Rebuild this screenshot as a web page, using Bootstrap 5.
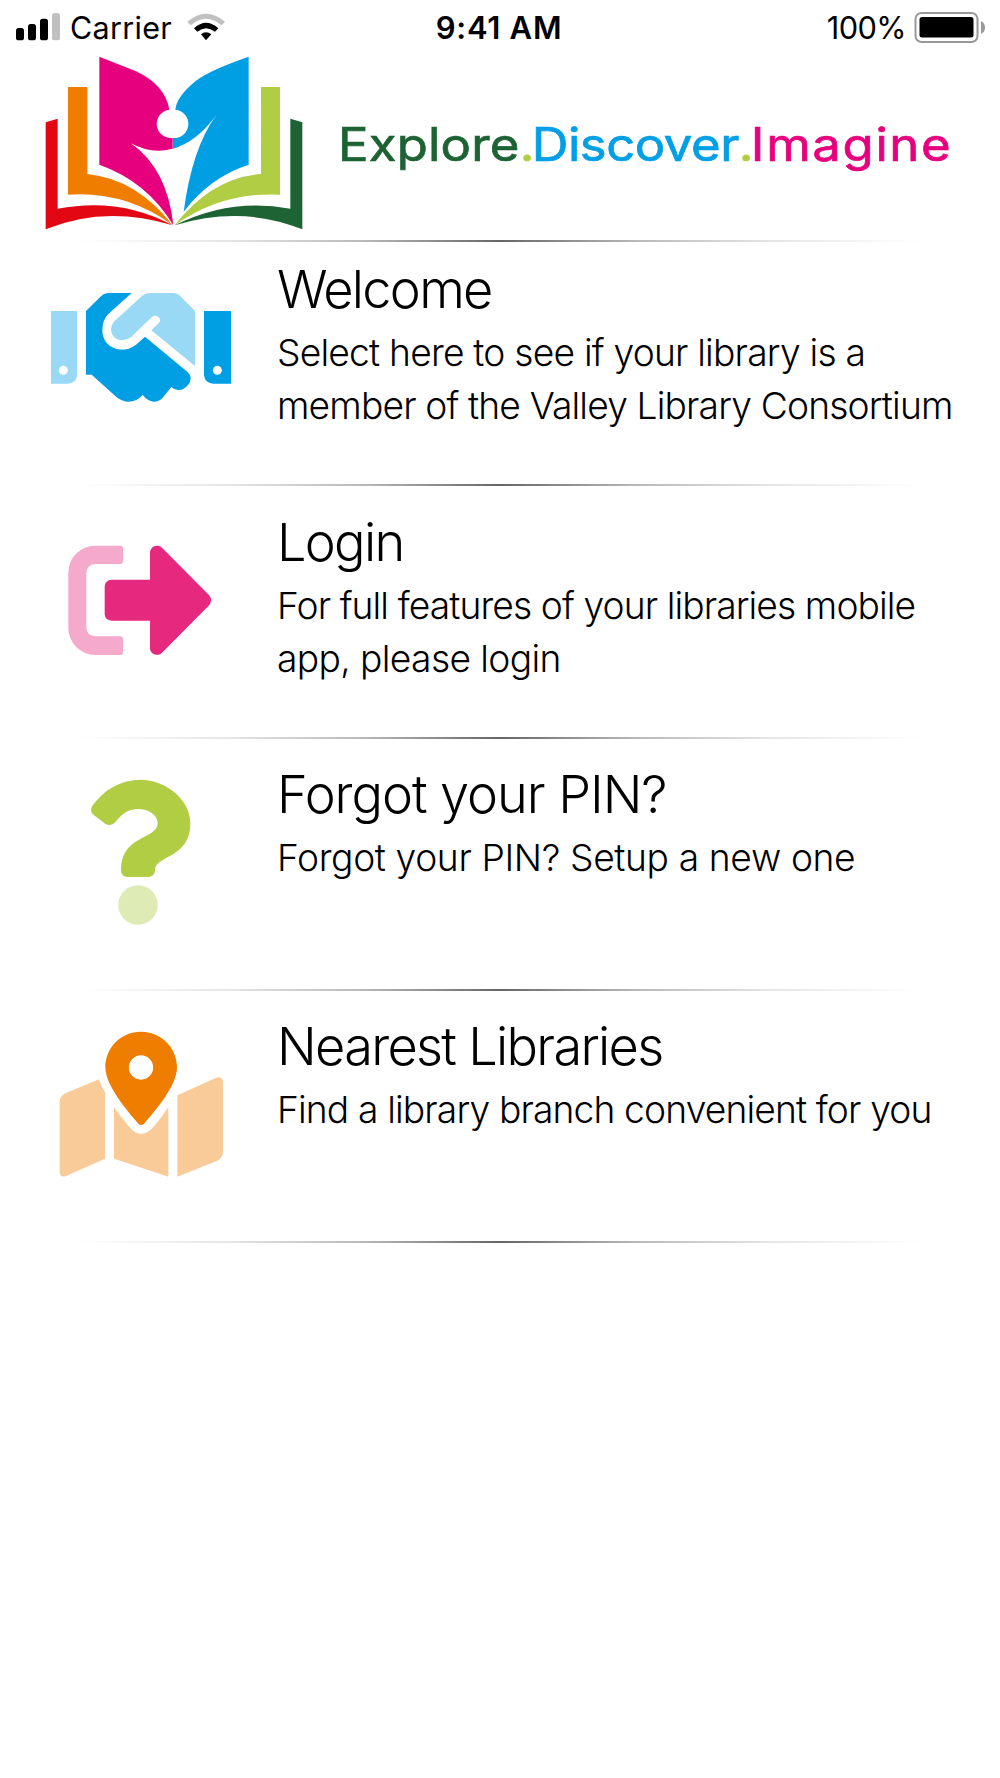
<!DOCTYPE html>
<html lang="en">
<head>
<meta charset="utf-8">
<meta name="viewport" content="width=device-width, initial-scale=1">
<title>Valley Library Consortium</title>
<link href="https://cdn.jsdelivr.net/npm/bootstrap@5.3.0/dist/css/bootstrap.min.css" rel="stylesheet">
<style>
body{font-family:Inter,"Liberation Sans",sans-serif;color:#000;background:#fff}
.screen{width:1000px;min-height:1778px;overflow:hidden}
svg{display:block;flex:none}
.statusbar{height:45px;padding:0 14px 0 16px;font-size:31px;line-height:55px}
.statusbar>div{flex:1 1 0}
.carrier{margin-left:8px;font-size:30.5px;letter-spacing:.3px}
.wifi{margin-left:14px}
.clock{font-weight:600;letter-spacing:.7px;padding-right:4px}
.percent{font-size:30.8px;letter-spacing:-.6px;margin-right:8px}
.brand{height:195px;padding-left:30px}
.tagline{font-size:46px;font-weight:400;line-height:60px;padding-top:69px;margin-left:17.500px;white-space:nowrap;transform:scaleX(1.105);transform-origin:0 0;-webkit-text-stroke:.7px}
.tag-green{color:#1d6233;letter-spacing:.2px}.tag-blue{color:#009fe6;letter-spacing:-.4px}.tag-pink{color:#e6007e;letter-spacing:1.5px}.tag-lime{color:#b0cd40;letter-spacing:-2.4px}
.divider{height:2px;margin:0 76px;background:linear-gradient(90deg,rgba(0,0,0,0),rgba(0,0,0,.1) 18%,rgba(0,0,0,.28) 34%,rgba(0,0,0,.6) 50%,rgba(0,0,0,.28) 66%,rgba(0,0,0,.1) 82%,rgba(0,0,0,0))}
.menu-item{height:250px;color:#000;text-decoration:none}
.menu-item.is-welcome{height:242px}
.menu-item.is-login{height:251px}
.menu-body{padding-top:22.5px}
.is-welcome .menu-body{padding-top:15px}
.is-login .menu-body{padding-top:23.5px}
.icon-col{width:277px;flex:none;padding:28px 0 0 30px}
.is-login .icon-col{padding-top:34px}
.is-pin .icon-col{padding:21px 0 0 50px}
.is-map .icon-col{padding:19px 0 0 40px}
.item-title{font-size:52.3px;font-weight:300;line-height:64px;margin:0 0 5px;white-space:nowrap;letter-spacing:-1.7px}
.is-welcome .item-title{margin-bottom:4.6px}
.is-pin .item-title{letter-spacing:-1.05px}
.item-text{font-size:37.2px;font-weight:300;line-height:53.5px;margin:0;white-space:nowrap;letter-spacing:-.79px}
.is-welcome .item-text .tail{letter-spacing:-.85px}
.is-login .item-text{letter-spacing:-.9px}
.is-login .item-text .tail{letter-spacing:-.63px}
.is-pin .item-text{letter-spacing:-.37px}
.is-map .item-text{letter-spacing:-.86px}
</style>
<script src="https://cdn.jsdelivr.net/npm/bootstrap@5.3.0/dist/js/bootstrap.bundle.min.js"></script>
</head>
<body>
<div class="screen">
  <header>
    <div class="statusbar d-flex">
      <div class="d-flex">
        <svg width="46" height="45" viewBox="48 0 138 135"><rect x="48" y="84" width="24" height="37" rx="8"/><rect x="84" y="72" width="24" height="49" rx="8"/><rect x="120" y="56" width="24" height="65" rx="8"/><rect x="156" y="39" width="24" height="82" rx="8" fill="#c0c0c0"/></svg>
        <span class="carrier">Carrier</span>
        <svg class="wifi" width="40" height="45" viewBox="560 0 120 135"><path d="M564 65Q620 17 677 65L667 76Q620 37 574 76Z" fill="#c0c0c0"/><path d="M584 85Q620 52 657 85L647 95Q620 74 594 95Z"/><path d="M605 103Q620 91 636 103L620 121Z"/></svg>
      </div>
      <div class="clock text-center">9:41 AM</div>
      <div class="d-flex justify-content-end">
        <span class="percent">100%</span>
        <svg width="72" height="45" viewBox="0 0 72 45"><rect x="1.500" y="13" width="62" height="29" rx="6" fill="none" stroke="#999" stroke-width="2"/><rect x="5.500" y="17" width="54" height="20.500" rx="2.500"/><path d="M67 21Q71 23 71 27.500T67 34Z" fill="#999"/></svg>
      </div>
    </div>
    <div class="brand d-flex">
      <svg width="290" height="195" viewBox="0 0 870 585">
        <path d="M47 232L83 221V491Q270 455 428 541Q225 480 47 553Z" fill="#e30613"/>
        <path d="M114 126H172V387Q320 402 428 541Q290 438 114 449Z" fill="#ef7d00"/>
        <path d="M208 35L318 79Q405 120 418 194A42 42 0 0 0 428 279V311Q365 329 303 295Q412 372 430 541Q352 410 208 359Z" fill="#e6007e"/>
        <path d="M656 35V359Q540 396 461 500Q486 310 559 210Q500 291 429 311V279A42 42 0 0 0 436 194Q439 155 498 107Q540 75 656 35Z" fill="#009fe3"/>
        <path d="M693 126H750V449Q575 440 434 541Q545 398 693 387Z" fill="#b0cd43"/>
        <path d="M781 221L817 232V553Q635 480 434 541Q600 457 781 491Z" fill="#1d6333"/>
        <circle cx="426" cy="237" r="42" fill="#fff"/>
      </svg>
      <div class="tagline"><span class="tag-green">Explore</span><span class="tag-lime">.</span><span class="tag-blue">Discover</span><span class="tag-lime">.</span><span class="tag-pink">Imagine</span></div>
    </div>
    <div class="divider"></div>
  </header>
  <main>
    <a class="menu-item is-welcome d-flex" href="#">
      <div class="icon-col">
        <svg width="230" height="150" viewBox="0 0 690 450">
          <path d="M63 123H141V315Q139 339 115 341H63Z" fill="#99d9f5"/>
          <path d="M522 123H603V341H549Q524 339 522 315Z" fill="#009fe3"/>
          <path d="M168 123L213 79Q223 69 238 69H305L234 133Q217 151 217 180C217 226 259 247 296 236Q309 232 320 223L345 200L470 304Q488 319 479 338Q464 361 444 360Q432 359 424 351L398 383Q386 396 370 395Q354 394 338 375Q320 396 293 395Q275 394 260 382L185 314H168Z" fill="#009fe3"/>
          <path d="M337 77Q347 69 360 69H429Q442 69 451 79L495 123V288L364 181L386 160Q393 151 388 143Q378 133 366 141L303 201Q284 216 262 208C240 198 238 170 253 154Z" fill="#99d9f5"/>
          <circle cx="100" cy="301" r="13.500" fill="#fff"/><circle cx="562" cy="301" r="13.500" fill="#fff"/>
        </svg>
      </div>
      <div class="menu-body"><h2 class="item-title">Welcome</h2><p class="item-text">Select here to see if your library is a<br><span class="tail">member of the Valley Library Consortium</span></p></div>
    </a>
    <div class="divider"></div>
    <a class="menu-item is-login d-flex" href="#">
      <div class="icon-col">
        <svg width="230" height="150" viewBox="0 0 690 450">
          <path d="M196 77H271Q279 77 279 85V124Q279 132 271 132H196Q169 134 169 161V322Q169 347 196 349H271Q279 349 279 357V396Q279 405 271 405H196A81 81 0 0 1 115 324V158A81 81 0 0 1 196 77Z" fill="#f5a9cb"/>
          <path d="M360 179V98C360 80 382 70 396 83L536 224Q551 241 536 257L396 398C382 412 360 402 360 384V302H245Q225 301 224 282V200Q225 180 245 179Z" fill="#e6287f"/>
        </svg>
      </div>
      <div class="menu-body"><h2 class="item-title">Login</h2><p class="item-text">For full features of your libraries mobile<br><span class="tail">app, please login</span></p></div>
    </a>
    <div class="divider"></div>
    <a class="menu-item is-pin d-flex" href="#">
      <div class="icon-col">
        <svg width="200" height="180" viewBox="0 0 600 540">
          <path d="M127 137C164 88 211 59 273 59C345 59 421 117 421 190C421 297 315 285 315 331Q314 349 296 351H233Q214 350 213 332C211 226 323 238 323 190C323 164 294 147 266 147C230 147 214 165 194 188Q183 199 168 193L130 164Q118 153 127 137Z" fill="#b0cd43"/>
          <circle cx="264" cy="435" r="59.500" fill="#dfebb4"/>
        </svg>
      </div>
      <div class="menu-body"><h2 class="item-title">Forgot your PIN?</h2><p class="item-text">Forgot your PIN? Setup a new one</p></div>
    </a>
    <div class="divider"></div>
    <a class="menu-item is-map d-flex" href="#">
      <div class="icon-col">
        <svg width="210" height="180" viewBox="0 0 630 540">
          <path d="M76 250L177 208Q183 228 195 247V446L78 498Q61 504 59 487V275Q60 257 76 250Z" fill="#f9cb99"/>
          <path d="M222 292Q245 326 274 358Q303 385 334 358Q362 328 385 292V500L222 446Z" fill="#f9cb99"/>
          <path d="M412 256L529 203Q546 198 549 214V427Q548 444 532 452L412 500Z" fill="#f9cb99"/>
          <path fill-rule="evenodd" d="M303 65C362 65 411 112 411 172C411 227 348 300 312 341Q303 349 295 341C258 299 196 224 196 172C196 112 244 65 303 65ZM303 136A36.500 36.500 0 1 0 303 209A36.500 36.500 0 1 0 303 136Z" fill="#ef7d00"/>
        </svg>
      </div>
      <div class="menu-body"><h2 class="item-title">Nearest Libraries</h2><p class="item-text">Find a library branch convenient for you</p></div>
    </a>
    <div class="divider"></div>
  </main>
</div>
</body>
</html>
